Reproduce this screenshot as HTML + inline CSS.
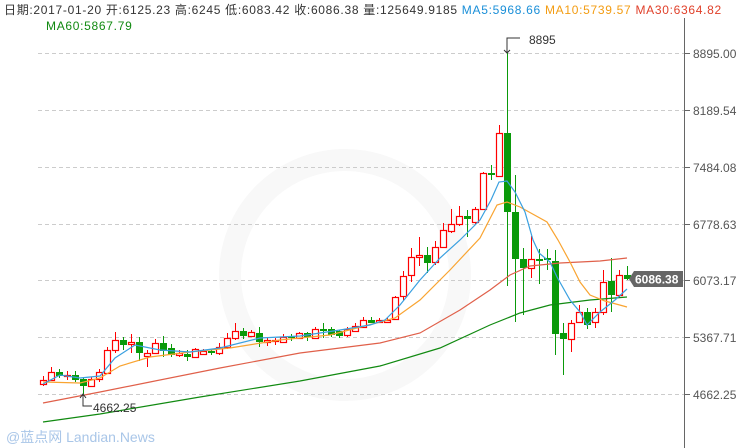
<!DOCTYPE html>
<html><head><meta charset="utf-8"><style>
html,body{margin:0;padding:0;background:#fff;}
#w{position:relative;width:741px;height:448px;overflow:hidden;font-family:"Liberation Sans","Noto Sans CJK SC",sans-serif;}
.h{position:absolute;font-size:12px;white-space:nowrap;color:#333;letter-spacing:0.7px;}
</style></head><body><div id="w">
<div class="h" style="left:4px;top:1px;">日期:2017-01-20 开:6125.23 高:6245 低:6083.42 收:6086.38 量:125649.9185 <span style="color:#1a8fd8">MA5:5968.66</span> <span style="color:#f39c12">MA10:5739.57</span> <span style="color:#e0402a">MA30:6364.82</span></div>
<div class="h" style="left:46px;top:19px;color:#118a11;">MA60:5867.79</div>
<svg id="s" width="741" height="448" style="position:absolute;left:0;top:0">
<circle cx="345" cy="275" r="115" fill="none" stroke="#f8f8f8" stroke-width="22"/>
<g stroke="#ccc" stroke-dasharray="4,3" stroke-width="1">
<line x1="38" x2="684" y1="53.5" y2="53.5"/><line x1="38" x2="684" y1="110.5" y2="110.5"/><line x1="38" x2="684" y1="167.5" y2="167.5"/><line x1="38" x2="684" y1="224.5" y2="224.5"/><line x1="38" x2="684" y1="280.5" y2="280.5"/><line x1="38" x2="684" y1="337.5" y2="337.5"/><line x1="38" x2="684" y1="394.5" y2="394.5"/>
</g>
<line x1="684.5" x2="684.5" y1="18" y2="448" stroke="#666"/>
<g stroke="#666"><line x1="684" x2="690" y1="53.5" y2="53.5"/><line x1="684" x2="690" y1="110.5" y2="110.5"/><line x1="684" x2="690" y1="167.5" y2="167.5"/><line x1="684" x2="690" y1="224.5" y2="224.5"/><line x1="684" x2="690" y1="280.5" y2="280.5"/><line x1="684" x2="690" y1="337.5" y2="337.5"/><line x1="684" x2="690" y1="394.5" y2="394.5"/></g>
<g font-size="12" fill="#555" font-family="Liberation Sans,sans-serif">
<text x="693" y="58">8895.00</text><text x="693" y="115">8189.54</text><text x="693" y="172">7484.08</text><text x="693" y="229">6778.63</text><text x="693" y="285">6073.17</text><text x="693" y="342">5367.71</text><text x="693" y="399">4662.25</text>
</g>
<g id="c"></g>
<g fill="none" stroke-width="1.2">
<polyline stroke="#118a11" points="43,422 100,414 200,397 300,381 380,366 440,348 490,325 520,313 550,305 590,300 627,297"/>
<polyline stroke="#e0604a" points="43,403 100,392 150,382 220,368 300,353 380,343 420,333 460,310 490,290 510,275 530,266 560,263 600,261 627,258"/>
<polyline stroke="#f9a431" points="43,382 80,383 100,378 120,366 150,357 190,352 230,348 280,340 330,335 380,322 395,318 420,300 450,270 480,238 497,205 507,202 520,207 547,222 558,240 570,262 580,282 590,295 605,301 627,307"/>
<polyline stroke="#3aa0e0" points="43,384 60,375 80,378 100,376 115,358 135,345 160,350 190,352 220,348 260,338 300,336 340,330 370,325 385,320 400,305 420,280 440,258 460,240 480,220 491,200 499,182 507,181 515,192 525,212 533,240 539,253 550,262 557,277 570,300 580,312 587,325 600,312 615,300 627,289"/>
</g>
<path d="M83,394 V406 H92 M80,398 L83,394 L86,398" fill="none" stroke="#333"/>
<text x="93" y="412" font-size="12" fill="#333">4662.25</text>
<path d="M507,53 V38 H520 M504,50 L507,53 L510,50" fill="none" stroke="#333"/>
<text x="529" y="44" font-size="12" fill="#333">8895</text>
<path d="M629,279 L634,271 H683 V287 H634 Z" fill="#666"/>
<text x="635" y="283.5" font-size="12" font-weight="bold" fill="#fff">6086.38</text>
<text x="6" y="442" font-size="14" fill="#a9c6e8" font-family="Liberation Sans,Noto Sans CJK SC,sans-serif">@蓝点网 Landian.News</text>
</svg>
<script>
var d=[
['r',380,384,376,386],['r',372,380,367,381],['g',372,376,369,378],['r',375,376,371,380],['g',375,380,371,382],['g',379,386,377,394],['r',379,386,377,386],['r',372,379,369,382],['r',350,373,347,373],['r',340,350,332,353],['g',340,345,337,350],['r',342,344,334,353],['g',342,353,337,361],['r',353,356,350,367],['r',343,353,339,354],['g',343,351,336,357],['g',348,355,344,357],['r',353,355,350,357],['g',354,357,350,361],['r',349,357,348,358],['r',351,354,349,355],['g',351,353,349,355],['r',347,353,343,355],
['r',338,347,333,349],['r',331,338,323,340],['g',331,336,328,339],['r',332,336,330,337],['g',333,342,327,347],['r',340,342,338,346],['r',340,341,338,345],['r',337,342,334,343],['g',336,337,334,341],['r',333,338,332,339],['g',333,337,332,341],['r',329,338,327,339],['g',329,330,323,338],['g',329,335,327,337],['g',331,336,330,338],['r',329,335,327,337],['r',326,331,323,332],['r',320,327,317,327],['g',320,323,317,323],['r',320,322,318,323],['r',320,322,318,322],
['r',297,319,296,320],['r',276,296,271,301],['r',257,275,248,282],['r',255,257,237,266],['g',255,263,247,273],['r',247,262,241,265],['r',230,247,223,248],['r',224,231,209,233],['r',216,224,206,226],['g',216,219,210,237],['r',209,222,207,224],['r',173,209,172,210],['g',173,175,165,180],['r',133,176,125,177],['g',133,212,53,286],['g',212,259,175,322],['g',259,268,248,315],['r',259,268,236,278],['g',259,261,249,284],['g',258,260,249,270],['g',261,334,250,355],['g',333,339,323,375],['r',323,339,320,352],['r',312,322,305,323],['g',312,325,308,329],['r',312,322,308,328],['r',282,312,270,315],['g',281,295,258,312],['r',275,295,270,298],['g',275,279,266,280]];
var s='';
for(var i=0;i<d.length;i++){var x=43+i*8,c=d[i],col=c[0]=='r'?'#ff0000':'#0a9a0a';
var h=Math.max(c[2]-c[1],1);
if(c[0]=='r'){s+='<line x1="'+(x+.5)+'" x2="'+(x+.5)+'" y1="'+c[3]+'" y2="'+c[1]+'" stroke="'+col+'"/>';s+='<line x1="'+(x+.5)+'" x2="'+(x+.5)+'" y1="'+c[2]+'" y2="'+c[4]+'" stroke="'+col+'"/>';
s+='<rect x="'+(x-2.5)+'" y="'+(c[1]+.5)+'" width="6" height="'+h+'" fill="#fff" stroke="'+col+'" stroke-width="1.2"/>';}
else{s+='<line x1="'+(x+.5)+'" x2="'+(x+.5)+'" y1="'+c[3]+'" y2="'+c[4]+'" stroke="'+col+'"/>';s+='<rect x="'+(x-3)+'" y="'+c[1]+'" width="7" height="'+Math.max(h,2)+'" fill="'+col+'"/>';}}
document.getElementById('c').innerHTML=s;
</script>
</div></body></html>
